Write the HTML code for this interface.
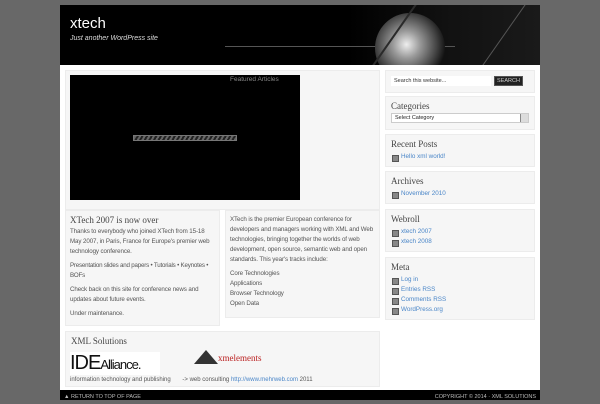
<!DOCTYPE html>
<html><head><style>
*{margin:0;padding:0;box-sizing:border-box}
body{width:600px;height:400px;background:#686868;font-family:"Liberation Sans",sans-serif;position:relative;overflow:hidden;font-size:7px;color:#555}
.abs{position:absolute}
#wrap{left:60px;top:5px;width:480px;height:395px;background:#fff}
#hdr{left:60px;top:5px;width:480px;height:60px;background:linear-gradient(90deg,#000 0%,#000 60%,#111 80%,#1a1a1a 100%);overflow:hidden}
.box{position:absolute;background:#f6f6f6;border:1px solid #ececec}
h3{font-family:"Liberation Serif",serif;font-weight:normal;color:#444;font-size:9px}
.li{position:relative;padding-left:10px;color:#4a86c8;height:10px;line-height:10px;font-size:6.3px}
.li:before{content:"";position:absolute;left:1px;top:2.5px;width:5px;height:5px;background:#888;border:1px solid #555}
p{line-height:10px;margin-bottom:4px;font-size:6.2px;letter-spacing:-0.1px}
a{color:#4a86c8;text-decoration:none}
</style></head><body>
<div id="wrap" class="abs"></div>
<div id="hdr" class="abs">
 <div class="abs" style="left:10px;top:10px;color:#fff;font-size:15px">xtech</div>
 <div class="abs" style="left:10px;top:30px;color:#ddd;font-size:7px;font-style:italic">Just another WordPress site</div>
 <div class="abs" style="left:165px;top:41px;width:230px;height:1px;background:#555"></div>
 <div class="abs" style="left:315px;top:8px;width:70px;height:70px;border-radius:50%;background:radial-gradient(circle at 45% 45%,#eee 0%,#999 25%,#444 55%,#111 72%);"></div>
 <div class="abs" style="left:330px;top:-10px;width:2px;height:90px;background:#2a2a2a;transform:rotate(35deg)"></div>
 <div class="abs" style="left:440px;top:-10px;width:1px;height:90px;background:#555;transform:rotate(35deg)"></div>
</div>
<div class="box" style="left:65px;top:70px;width:315px;height:140px"></div>
<div class="abs" style="left:70px;top:75px;width:230px;height:125px;background:#000">
 <div class="abs" style="left:160px;top:1px;color:#888;font-size:6.5px">Featured Articles</div>
 <div class="abs" style="left:63px;top:60px;width:104px;height:6px;border:1px solid #777;background:repeating-linear-gradient(-60deg,#666 0 2px,#222 2px 4px)"></div>
</div>
<div class="box" style="left:385px;top:70px;width:150px;height:23px">
 <div class="abs" style="left:5px;top:5px;width:100px;height:10px;background:#fff;font-size:5.5px;color:#333;padding:2px 3px">Search this website...</div>
 <div class="abs" style="left:108px;top:5px;width:29px;height:10px;background:#222;border:1px solid #555;color:#ccc;font-size:5.5px;text-align:center;line-height:8px">SEARCH</div>
</div>
<div class="box" style="left:385px;top:96px;width:150px;height:34px;padding:4px 5px">
 <h3>Categories</h3>
 <div style="margin-top:2px;height:10px;background:#fff;border:1px solid #ccc;font-size:5.5px;color:#222;padding:1px 3px;position:relative">Select Category<span style="position:absolute;right:0;top:0;width:8px;height:8px;background:#ddd;border-left:1px solid #888"></span></div>
</div>
<div class="box" style="left:385px;top:134px;width:150px;height:33px;padding:4px 5px">
 <h3>Recent Posts</h3><div class="li" style="margin-top:3px">Hello xml world!</div>
</div>
<div class="box" style="left:385px;top:171px;width:150px;height:33px;padding:4px 5px">
 <h3>Archives</h3><div class="li" style="margin-top:3px">November 2010</div>
</div>
<div class="box" style="left:385px;top:209px;width:150px;height:43px;padding:4px 5px">
 <h3>Webroll</h3><div class="li" style="margin-top:3px">xtech 2007</div><div class="li">xtech 2008</div>
</div>
<div class="box" style="left:385px;top:257px;width:150px;height:63px;padding:4px 5px">
 <h3>Meta</h3><div class="li" style="margin-top:3px">Log in</div><div class="li">Entries RSS</div><div class="li">Comments RSS</div><div class="li">WordPress.org</div>
</div>
<div class="box" style="left:65px;top:210px;width:155px;height:116px;padding:4px 4px">
 <h3 style="margin-bottom:2px">XTech 2007 is now over</h3>
 <p>Thanks to everybody who joined XTech from 15-18 May 2007, in Paris, France for Europe's premier web technology conference.</p>
 <p style="letter-spacing:-0.2px">Presentation slides and papers • Tutorials • Keynotes • BOFs</p>
 <p>Check back on this site for conference news and updates about future events.</p>
 <p>Under maintenance.</p>
</div>
<div class="box" style="left:225px;top:210px;width:155px;height:108px;padding:4px 4px">
 <p>XTech is the premier European conference for developers and managers working with XML and Web technologies, bringing together the worlds of web development, open source, semantic web and open standards. This year's tracks include:</p>
 <p>Core Technologies<br>Applications<br>Browser Technology<br>Open Data</p>
</div>
<div class="box" style="left:65px;top:331px;width:315px;height:56px;padding:4px 5px">
 <h3>XML Solutions</h3>
 <div class="abs" style="left:4px;top:20px;width:90px;height:23px;background:#fff;font-size:20px;color:#111;line-height:23px;letter-spacing:-1px">IDE<span style="font-size:13px">Alliance.</span></div>
 <div class="abs" style="left:128px;top:18px;width:0;height:0;border-left:12px solid transparent;border-right:12px solid transparent;border-bottom:14px solid #333"></div>
 <div class="abs" style="left:152px;top:21px;color:#b22;font-family:'Liberation Serif',serif;font-size:9px">xmelements</div>
 <div class="abs" style="left:4px;top:45px;font-size:6px">information technology and publishing &nbsp;&nbsp;&nbsp;&nbsp;&nbsp; -&gt; web consulting <a>http://www.mehrweb.com</a> 2011</div>
</div>
<div class="abs" style="left:60px;top:390px;width:480px;height:10px;background:#000;color:#bbb;font-size:5.5px;line-height:14px">
 <span style="position:absolute;left:4px">▲ RETURN TO TOP OF PAGE</span>
 <span style="position:absolute;right:4px">COPYRIGHT © 2014 · XML SOLUTIONS</span>
</div>
</body></html>
